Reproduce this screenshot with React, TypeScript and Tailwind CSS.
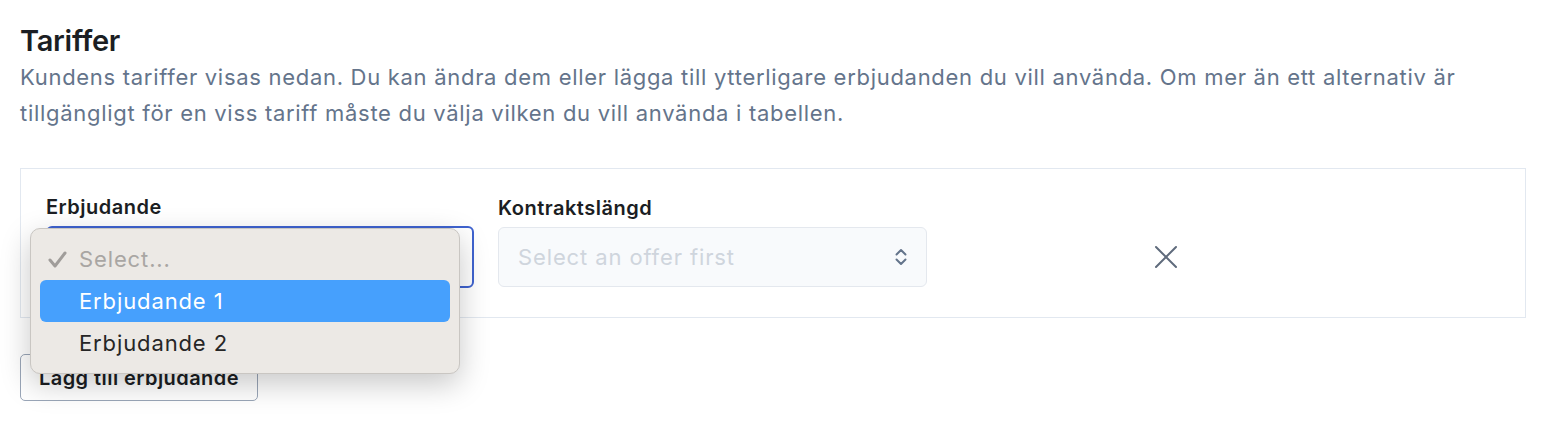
import React from "react";

function Chevrons() {
  return (
    <svg width="14" height="20" viewBox="0 0 14 20" fill="none" stroke="#64748b" strokeWidth="2" strokeLinecap="round" strokeLinejoin="round">
      <path d="M2.5 7.5l4.5-4.5 4.5 4.5" />
      <path d="M2.5 12.5l4.5 4.5 4.5-4.5" />
    </svg>
  );
}

function XIcon() {
  return (
    <svg width="24" height="24" viewBox="0 0 24 24" fill="none" stroke="#5f6b7c" strokeWidth="2" strokeLinecap="round">
      <path d="M2 2l20 20" />
      <path d="M22 2L2 22" />
    </svg>
  );
}

export default function App() {
  return (
    <div className="bg-white min-h-[426px] pl-5 pr-6 pt-[23px] text-[#1b1e23]" style={{ fontFamily: "Inter, 'Noto Sans', sans-serif" }}>
      <h2 className="text-[29px] font-semibold leading-[36px] tracking-[-0.01em]">Tariffer</h2>
      <p className="text-[22px] leading-[36px] tracking-[0.032em] text-[#64748b] mt-0">
        Kundens tariffer visas nedan. Du kan ändra dem eller lägga till ytterligare erbjudanden du vill använda. Om mer än ett alternativ är tillgängligt för en viss tariff måste du välja vilken du vill använda i tabellen.
      </p>

      <div className="mt-[37px] border border-[#e2e8f0] bg-white px-[25px] pt-[26px] pb-[29px]">
        <div className="flex gap-6 items-end">
          <div className="w-[428px] flex flex-col">
            <label className="text-[20px] font-semibold leading-[24px] tracking-[0.025em] mb-[7px]">Erbjudande</label>
            <div className="relative h-[62px]">
              <div className="h-full rounded-[6px] border-2 border-[#3f63cf] bg-white" />
              <div className="absolute left-[-16px] top-[2px] w-[430px] rounded-[10px] border border-[#c9c6c2] bg-[#ece9e5] shadow-[0_10px_30px_rgba(0,0,0,0.22)] px-[9px] py-[9px] z-10">
                <div className="h-[42px] flex items-center text-[22px] tracking-[0.04em] text-[#a9a6a3]">
                  <span className="w-[39px] pl-[8px] flex items-center">
                    <svg width="19" height="17" viewBox="0 0 19 17" fill="none" stroke="#a09d9a" strokeWidth="3" strokeLinecap="round" strokeLinejoin="round">
                      <path d="M2 9l5 6L17 2" />
                    </svg>
                  </span>
                  Select...
                </div>
                <div className="h-[42px] flex items-center text-[22px] tracking-[0.04em] text-white bg-[#46a0fd] rounded-[6px] pl-[39px]">Erbjudande 1</div>
                <div className="h-[42px] flex items-center text-[22px] tracking-[0.04em] text-[#262626] pl-[39px]">Erbjudande 2</div>
              </div>
            </div>
          </div>
          <div className="w-[429px] flex flex-col">
            <label className="text-[20px] font-semibold leading-[24px] tracking-[0.025em] mb-[7px]">Kontraktslängd</label>
            <div className="h-[60px] mb-px rounded-[6px] border border-[#e4e8ee] bg-[#f8fafc] flex items-center justify-between pl-[19px] pr-[18px]">
              <span className="text-[22px] tracking-[0.04em] text-[#cfd5dd]">Select an offer first</span>
              <Chevrons />
            </div>
          </div>
          <div className="w-[429px] h-[60px] mb-px flex items-center justify-center">
            <XIcon />
          </div>
        </div>
      </div>

      <button className="mt-[36px] h-[47px] w-[238px] rounded-[5px] border border-[#9aa6b8] bg-white text-[20px] font-semibold tracking-[0.022em] text-[#1b1e23]">
        Lägg till erbjudande
      </button>
    </div>
  );
}
